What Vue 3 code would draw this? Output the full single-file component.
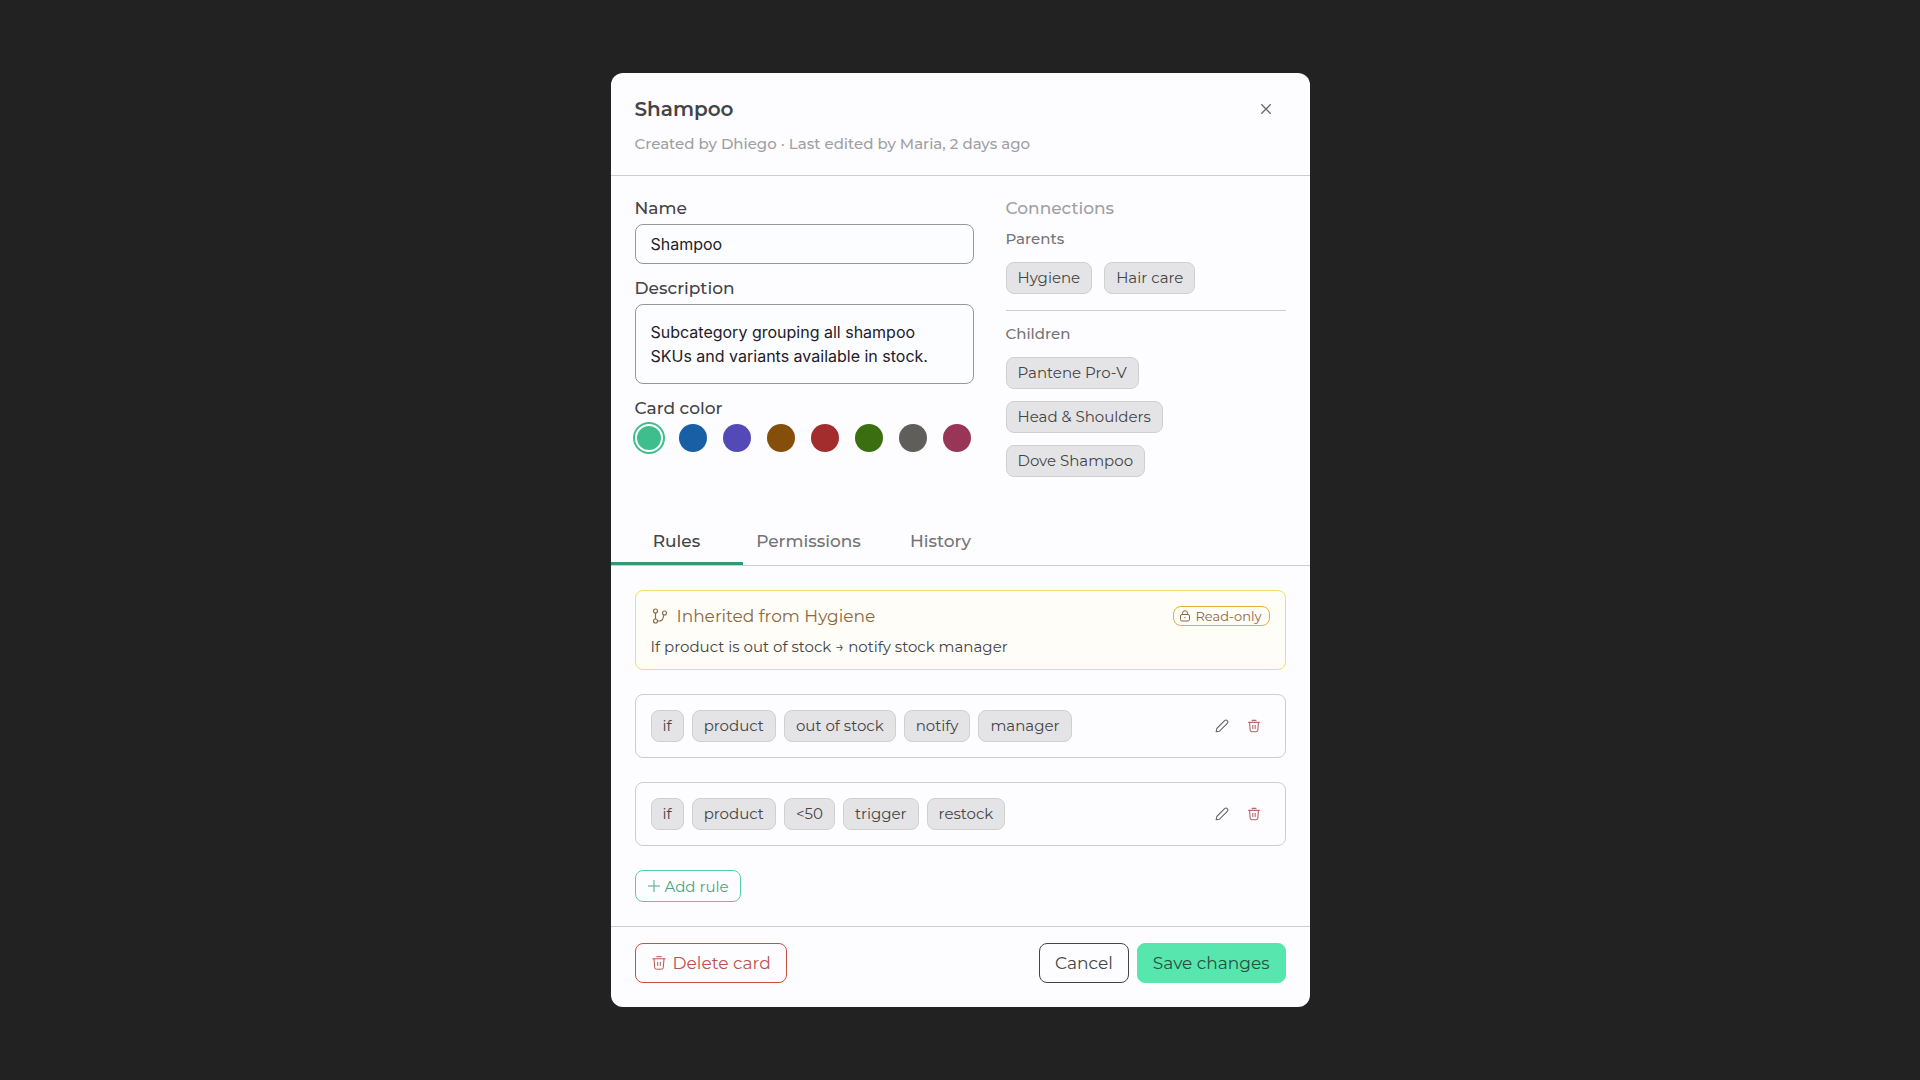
<template>
  <div class="overlay">
    <form class="card-modal" @submit.prevent>
      <header class="modal-header">
        <div class="title-row">
          <h1 class="title">{{ name }}</h1>
          <button type="button" class="icon-button" aria-label="Close">
            <svg width="16" height="16" viewBox="0 0 16 16" fill="none" stroke="currentColor" stroke-width="1.3">
              <path d="M3.3 3.3l9.4 9.4M12.7 3.3l-9.4 9.4" />
            </svg>
          </button>
        </div>
        <p class="subtitle">Created by Dhiego · Last edited by Maria, 2 days ago</p>
      </header>

      <section class="details">
        <div class="fields">
          <div class="field">
            <label for="card-name">Name</label>
            <input id="card-name" v-model="name" type="text" class="text-input" />
          </div>
          <div class="field">
            <label for="card-description">Description</label>
            <textarea id="card-description" v-model="description" rows="2" class="text-input text-area"></textarea>
          </div>
          <fieldset class="field colors">
            <legend>Card color</legend>
            <div class="swatches">
              <input
                v-for="color in colors"
                :key="color.value"
                v-model="selectedColor"
                type="radio"
                name="card-color"
                class="swatch"
                :value="color.value"
                :aria-label="color.label"
                :style="{ '--swatch': color.value }"
              />
            </div>
          </fieldset>
        </div>

        <div class="connections">
          <h2 class="connections-title">Connections</h2>
          <div class="connection-group">
            <h3>Parents</h3>
            <div class="parent-chips">
              <span v-for="parent in parents" :key="parent" class="chip">{{ parent }}</span>
            </div>
          </div>
          <div class="connection-group bordered">
            <h3>Children</h3>
            <div class="child-chips">
              <span v-for="child in children" :key="child" class="chip">{{ child }}</span>
            </div>
          </div>
        </div>
      </section>

      <nav class="tabs" role="tablist">
        <button
          v-for="tab in tabs"
          :key="tab"
          type="button"
          role="tab"
          class="tab"
          :class="{ active: tab === activeTab }"
          :aria-selected="tab === activeTab"
          @click="activeTab = tab"
        >
          {{ tab }}
        </button>
      </nav>

      <section class="rules">
        <div class="inherited">
          <div class="inherited-header">
            <svg width="18" height="18" viewBox="0 0 18 18" fill="none" stroke="currentColor" stroke-width="1.1">
              <circle cx="4.5" cy="4" r="2" />
              <circle cx="4.5" cy="14" r="2" />
              <circle cx="13.5" cy="6" r="2" />
              <path d="M4.5 6v6M6.5 14h1.7a4 4 0 0 0 3.9-3.2L12.9 8" />
            </svg>
            <h2>Inherited from Hygiene</h2>
            <span class="badge">
              <svg width="12" height="12" viewBox="0 0 12 12" fill="none" stroke="currentColor" stroke-width="1">
                <rect x="1.5" y="4.5" width="9" height="6.5" rx="1.5" />
                <path d="M3.5 4.5V3.2a2.5 2.5 0 0 1 5 0v1.3M5.4 7.7h1.2" />
              </svg>
              Read-only
            </span>
          </div>
          <p>If product is out of stock → notify stock manager</p>
        </div>

        <div v-for="(rule, index) in rules" :key="index" class="rule">
          <div class="rule-chips">
            <span v-for="part in rule" :key="part" class="chip">{{ part }}</span>
          </div>
          <div class="rule-actions">
            <button type="button" class="icon-button" aria-label="Edit rule">
              <svg width="16" height="16" viewBox="0 0 16 16" fill="none" stroke="currentColor" stroke-width="1.1" stroke-linejoin="round">
                <path d="M2.2 13.8l.6-3.3 7.8-7.8a1.85 1.85 0 0 1 2.7 2.7l-7.8 7.8z" />
              </svg>
            </button>
            <button type="button" class="icon-button danger" aria-label="Delete rule">
              <svg width="16" height="16" viewBox="0 0 16 16" fill="none" stroke="currentColor" stroke-width="1.1">
                <path d="M2.2 4.4h11.6M5.6 2.4h4.8M3.5 4.4l.7 8a1.5 1.5 0 0 0 1.5 1.3h4.6a1.5 1.5 0 0 0 1.5-1.3l.7-8M6.8 7v4M9.2 7v4" />
              </svg>
            </button>
          </div>
        </div>

        <button type="button" class="add-rule">
          <svg width="14" height="14" viewBox="0 0 14 14" fill="none" stroke="currentColor" stroke-width="1">
            <path d="M7 1v12M1 7h12" />
          </svg>
          Add rule
        </button>
      </section>

      <footer class="modal-footer">
        <button type="button" class="action delete">
          <svg width="16" height="16" viewBox="0 0 16 16" fill="none" stroke="currentColor" stroke-width="1">
            <path d="M1.5 3.8h13M5.4 1.7h5.2M3 3.8l.7 8.9a1.6 1.6 0 0 0 1.6 1.5h5.4a1.6 1.6 0 0 0 1.6-1.5l.7-8.9M6.7 6.8v4M9.3 6.8v4" />
          </svg>
          Delete card
        </button>
        <button type="button" class="action cancel">Cancel</button>
        <button type="submit" class="action save">Save changes</button>
      </footer>
    </form>
  </div>
</template>

<script setup>
import { ref } from 'vue'

const name = ref('Shampoo')
const description = ref('Subcategory grouping all shampoo SKUs and variants available in stock.')

const colors = [
  { label: 'Green', value: '#3dbe8b' },
  { label: 'Blue', value: '#185fa5' },
  { label: 'Purple', value: '#534ab7' },
  { label: 'Brown', value: '#854f0b' },
  { label: 'Red', value: '#a32d2d' },
  { label: 'Dark green', value: '#3b6d11' },
  { label: 'Gray', value: '#5f5e5a' },
  { label: 'Pink', value: '#993556' }
]
const selectedColor = ref('#3dbe8b')

const parents = ['Hygiene', 'Hair care']
const children = ['Pantene Pro-V', 'Head & Shoulders', 'Dove Shampoo']

const tabs = ['Rules', 'Permissions', 'History']
const activeTab = ref('Rules')

const rules = [
  ['if', 'product', 'out of stock', 'notify', 'manager'],
  ['if', 'product', '<50', 'trigger', 'restock']
]
</script>

<style>
body {
  margin: 0;
  background: #222222;
}
</style>

<style scoped>
.overlay {
  min-height: 100vh;
  display: flex;
  align-items: center;
  justify-content: center;
  font-family: Montserrat, Inter, sans-serif;
  color: #444446;
}

.card-modal {
  width: 100%;
  max-width: 699px;
  background: #fdfdff;
  border-radius: 12px;
  overflow: hidden;
}

h1,
h2,
h3,
p {
  margin: 0;
}

button {
  font-family: inherit;
  cursor: pointer;
}

svg {
  flex-shrink: 0;
}

.modal-header {
  padding: 24px;
  border-bottom: 1px solid #cdcdd0;
}

.title-row {
  display: flex;
  align-items: center;
  justify-content: space-between;
  margin-bottom: 16px;
}

.title {
  font-size: 20px;
  font-weight: 600;
  line-height: 24px;
}

.title-row .icon-button {
  margin-right: 8px;
}

.subtitle {
  font-size: 15px;
  font-weight: 500;
  line-height: 14px;
  color: #a0a0a2;
}

.icon-button {
  width: 24px;
  height: 24px;
  padding: 0;
  display: flex;
  align-items: center;
  justify-content: center;
  background: none;
  border: none;
  color: #69696b;
}

.icon-button.danger {
  color: #b56a6c;
}

.details {
  display: flex;
  gap: 32px;
  padding: 24px 24px 40px;
}

.fields {
  flex: 1;
  display: flex;
  flex-direction: column;
  gap: 16px;
}

.field {
  display: flex;
  flex-direction: column;
  gap: 8px;
}

.field label,
.colors legend {
  font-size: 17px;
  font-weight: 500;
  line-height: 16px;
}

.text-input {
  box-sizing: border-box;
  width: 100%;
  height: 40px;
  padding: 0 15px;
  border: 1px solid #98989b;
  border-radius: 8px;
  background: #fcfdff;
  color: #1f2029;
  font-family: Inter, sans-serif;
  font-size: 16px;
  line-height: 24px;
}

.text-area {
  height: 80px;
  padding: 15px;
  resize: none;
  overflow: hidden;
}

.colors {
  margin: 0;
  padding: 0;
  border: none;
  min-width: 0;
}

.colors legend {
  padding: 0 0 8px;
}

.swatches {
  display: flex;
  gap: 16px;
}

.swatch {
  appearance: none;
  box-sizing: border-box;
  width: 28px;
  height: 28px;
  margin: 0;
  border-radius: 50%;
  background: var(--swatch);
  cursor: pointer;
}

.swatch:checked {
  border: 2px solid #fdfdff;
  box-shadow: 0 0 0 2px var(--swatch);
}

.connections {
  width: 280px;
}

.connections-title {
  margin-bottom: 16px;
  font-size: 17px;
  font-weight: 500;
  line-height: 16px;
  color: #a0a0a2;
}

.connection-group h3 {
  margin-bottom: 16px;
  font-size: 15px;
  font-weight: 500;
  line-height: 14px;
  color: #747476;
}

.connection-group.bordered {
  margin-top: 16px;
  padding-top: 16px;
  border-top: 1px solid #cdcdd0;
}

.parent-chips {
  display: flex;
  flex-wrap: wrap;
  gap: 12px;
}

.child-chips {
  display: flex;
  flex-direction: column;
  align-items: flex-start;
  gap: 12px;
}

.chip {
  box-sizing: border-box;
  height: 32px;
  padding: 0 11px;
  border: 1px solid #d0d0d2;
  border-radius: 8px;
  background: #e4e4e6;
  font-size: 15px;
  font-weight: 400;
  line-height: 30px;
  white-space: nowrap;
}

.tabs {
  display: flex;
  border-bottom: 1px solid #cdcdd0;
}

.tab {
  width: 132px;
  height: 48px;
  padding: 3px 0 0;
  border: none;
  border-bottom: 3px solid transparent;
  background: none;
  color: #747476;
  font-size: 17px;
  font-weight: 500;
}

.tab.active {
  border-bottom-color: #339973;
  color: #444446;
}

.rules {
  display: flex;
  flex-direction: column;
  gap: 24px;
  padding: 24px;
}

.inherited {
  padding: 15px;
  border: 1px solid #f0df68;
  border-radius: 8px;
  background: #fffdf7;
}

.inherited-header {
  display: flex;
  align-items: center;
  margin-bottom: 14px;
  color: #8c6742;
}

.inherited h2 {
  flex: 1;
  margin-left: 8px;
  font-size: 17px;
  font-weight: 400;
  line-height: 20px;
}

.inherited p {
  font-size: 15px;
  font-weight: 400;
  line-height: 14px;
}

.badge {
  box-sizing: border-box;
  height: 20px;
  padding: 0 7px 0 5px;
  display: flex;
  align-items: center;
  gap: 4px;
  border: 1px solid #dcb43c;
  border-radius: 8px;
  font-size: 13px;
  line-height: 18px;
}

.rule {
  display: flex;
  align-items: center;
  justify-content: space-between;
  padding: 15px;
  border: 1px solid #cdcdd0;
  border-radius: 8px;
}

.rule-chips {
  display: flex;
  gap: 8px;
}

.rule-actions {
  display: flex;
  gap: 8px;
  margin-right: 4px;
}

.add-rule {
  align-self: flex-start;
  height: 32px;
  padding: 0 11px;
  display: flex;
  align-items: center;
  gap: 4px;
  border: 1px solid #55cfa5;
  border-radius: 8px;
  background: none;
  color: #4aa584;
  font-size: 15px;
  font-weight: 400;
}

.modal-footer {
  display: flex;
  gap: 8px;
  padding: 16px 24px 24px;
  border-top: 1px solid #cdcdd0;
}

.action {
  height: 40px;
  padding: 0 15px;
  display: flex;
  align-items: center;
  gap: 6px;
  border: 1px solid #444446;
  border-radius: 8px;
  background: none;
  color: #444446;
  font-size: 17px;
  font-weight: 400;
}

.action.delete {
  margin-right: auto;
  border-color: #c94f46;
  color: #b9534f;
}

.action.save {
  border-color: #57e6ad;
  background: #57e6ad;
  color: #27503f;
}
</style>
